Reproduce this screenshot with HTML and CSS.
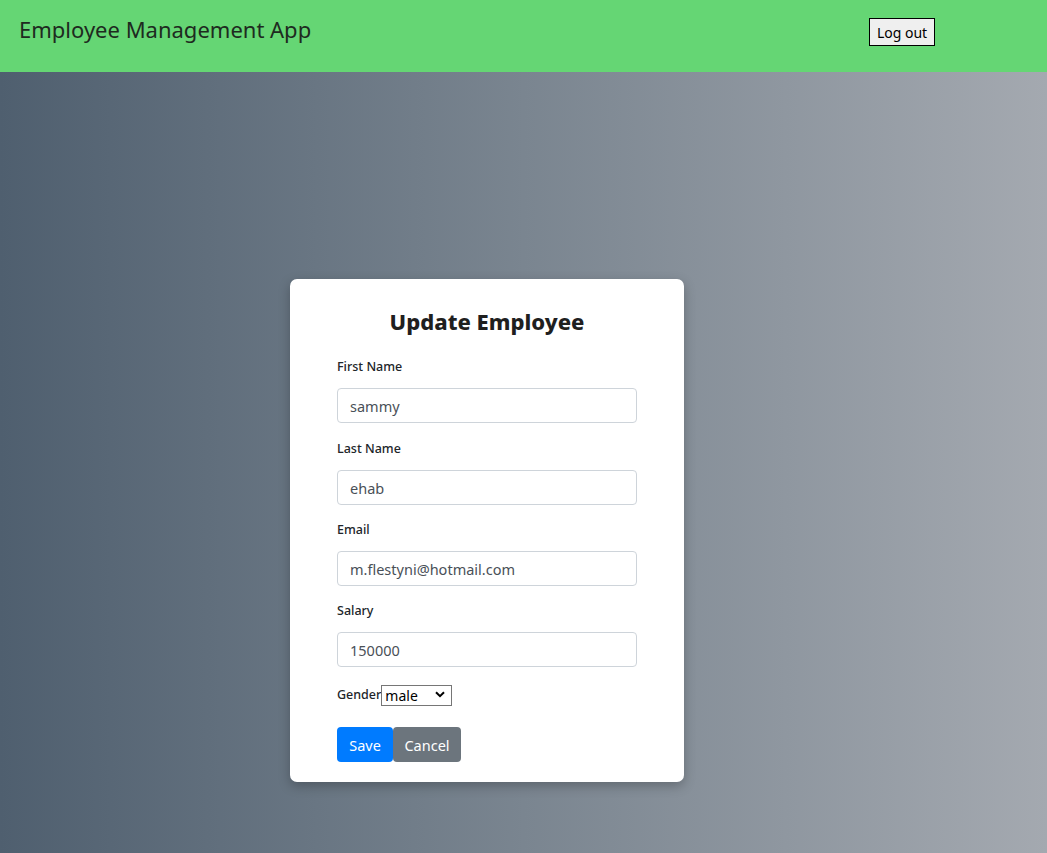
FILE: index.html
```html
<!DOCTYPE html>
<html>
<head>
<meta charset="utf-8">
<link rel="stylesheet" href="styles.css">
</head>
<body>
<header class="topbar">
  <h1 class="brand">Employee Management App</h1>
  <button class="logout">Log out</button>
</header>
<main class="stage">
  <form class="card">
    <h2 class="card-title">Update Employee</h2>
    <div class="field">
      <label class="label">First Name</label>
      <input class="input" type="text" value="sammy">
    </div>
    <div class="field">
      <label class="label">Last Name</label>
      <input class="input" type="text" value="ehab">
    </div>
    <div class="field field-tight">
      <label class="label">Email</label>
      <input class="input" type="text" value="m.flestyni@hotmail.com">
    </div>
    <div class="field field-tight">
      <label class="label">Salary</label>
      <input class="input" type="text" value="150000">
    </div>
    <div class="gender-row">
      <label class="label inline">Gender</label>
      <span class="select-wrap">
        <select class="select"><option>male</option><option>female</option></select>
        <svg class="chev" width="10" height="7" viewBox="0 0 10 7"><path d="M1 1.2 L5 5.2 L9 1.2" fill="none" stroke="#000" stroke-width="2"/></svg>
      </span>
    </div>
    <div class="actions">
      <button type="button" class="btn save">Save</button>
      <button type="button" class="btn cancel">Cancel</button>
    </div>
  </form>
</main>
</body>
</html>
```
FILE: styles.css
```css
* { box-sizing: border-box; }
html, body { margin: 0; padding: 0; }
body {
  font-family: "Noto Sans", "Open Sans", sans-serif;
  color: #212529;
  width: 1047px;
  height: 853px;
  overflow: hidden;
  background: linear-gradient(to right, #4f5f6f 0%, #7a8590 50%, #a4a9b0 100%);
}
.topbar {
  height: 72px;
  background: #65d674;
  display: flex;
  align-items: flex-start;
  padding: 0 112px 0 19px;
}
.brand {
  margin: 14px 0 0 0;
  font-size: 22px;
  line-height: 30px;
  font-weight: 400;
  color: #1e2a20;
}
.logout {
  margin: 18px 0 0 auto;
  height: 28px;
  width: 66px;
  padding: 0;
  font-family: "Noto Sans", sans-serif;
  font-size: 14px;
  color: #000;
  background: #efefef;
  border: 1px solid #000;
  border-radius: 0;
}
.stage {
  padding-top: 207px;
  display: flex;
  justify-content: center;
  padding-right: 73px;
}
.card {
  width: 394px;
  height: 503px;
  background: #fff;
  border-radius: 7px;
  box-shadow: 0 4px 12px rgba(0,0,0,0.25);
  padding: 28px 47px 0 47px;
}
.card-title {
  margin: 0 0 23px 0;
  text-align: center;
  font-size: 22px;
  font-weight: 800;
  color: #1f1f1f;
  line-height: 28px;
}
.field {
  display: flex;
  flex-direction: column;
  margin-bottom: 17px;
}
.field-tight { margin-top: -1px; }
.label {
  font-size: 12.5px;
  font-weight: 500;
  color: #212529;
  line-height: 18px;
  margin-bottom: 12px;
}
.label.inline { margin: 0; }
.input {
  width: 300px;
  height: 35px;
  border: 1px solid #ced4da;
  border-radius: 4px;
  padding: 0 12px;
  font-family: "Noto Sans", sans-serif;
  font-size: 14.5px;
  color: #495057;
  background: #fff;
}
.gender-row {
  display: flex;
  align-items: center;
  margin-top: 14px;
  height: 21px;
}
.select-wrap {
  position: relative;
  display: inline-block;
}
.select {
  -webkit-appearance: none;
  appearance: none;
  width: 71px;
  height: 21px;
  border: 1px solid #767676;
  border-radius: 0;
  background: #fff;
  padding: 0 0 0 3px;
  font-family: "Noto Sans", sans-serif;
  font-size: 14px;
  color: #000;
  line-height: 19px;
}
.chev {
  position: absolute;
  right: 7px;
  top: 7px;
  pointer-events: none;
}
.actions {
  display: flex;
  margin-top: 22px;
}
.btn {
  height: 35px;
  border: none;
  border-radius: 4px;
  font-family: "Noto Sans", sans-serif;
  font-size: 14.5px;
  color: #fff;
  padding: 0;
}
.save { width: 56px; background: #007bff; }
.cancel { width: 68px; background: #6c757d; }
```
